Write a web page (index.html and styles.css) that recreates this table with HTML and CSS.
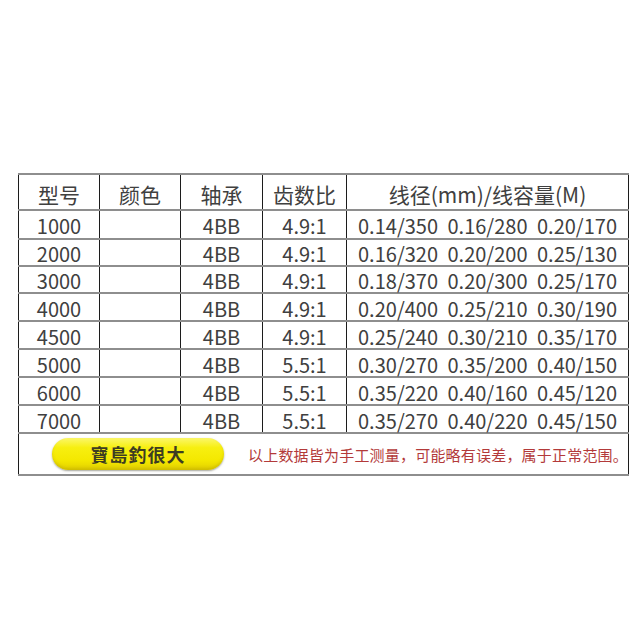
FILE: index.html
```html
<!DOCTYPE html>
<html lang="zh-CN">
<head>
<meta charset="utf-8">
<title>规格表</title>
<link rel="stylesheet" href="styles.css">
</head>
<body>
<div class="page">
  <table class="spec">
    <colgroup>
      <col class="c1"><col class="c2"><col class="c3"><col class="c4"><col class="c5">
    </colgroup>
    <thead>
      <tr class="head"><th>型号</th><th>颜色</th><th>轴承</th><th>齿数比</th><th>线径(mm)/线容量(M)</th></tr>
    </thead>
    <tbody>
      <tr class="r r1"><td>1000</td><td></td><td>4BB</td><td>4.9:1</td><td class="line">0.14/350 0.16/280 0.20/170</td></tr>
      <tr class="r r2"><td>2000</td><td></td><td>4BB</td><td>4.9:1</td><td class="line">0.16/320 0.20/200 0.25/130</td></tr>
      <tr class="r r3"><td>3000</td><td></td><td>4BB</td><td>4.9:1</td><td class="line">0.18/370 0.20/300 0.25/170</td></tr>
      <tr class="r r4"><td>4000</td><td></td><td>4BB</td><td>4.9:1</td><td class="line">0.20/400 0.25/210 0.30/190</td></tr>
      <tr class="r r5"><td>4500</td><td></td><td>4BB</td><td>4.9:1</td><td class="line">0.25/240 0.30/210 0.35/170</td></tr>
      <tr class="r r6"><td>5000</td><td></td><td>4BB</td><td>5.5:1</td><td class="line">0.30/270 0.35/200 0.40/150</td></tr>
      <tr class="r r7"><td>6000</td><td></td><td>4BB</td><td>5.5:1</td><td class="line">0.35/220 0.40/160 0.45/120</td></tr>
      <tr class="r r8"><td>7000</td><td></td><td>4BB</td><td>5.5:1</td><td class="line">0.35/270 0.40/220 0.45/150</td></tr>
      <tr class="foot">
        <td colspan="5">
          <div class="foot-inner">
            <span class="pill">寶島釣很大</span>
            <span class="note">以上数据皆为手工测量，可能略有误差，属于正常范围。</span>
          </div>
        </td>
      </tr>
    </tbody>
  </table>
</div>
</body>
</html>
```
FILE: styles.css
```css
html, body {
  margin: 0;
  padding: 0;
  background: #ffffff;
}

body {
  font-family: "Noto Sans CJK SC", "Noto Sans", sans-serif;
  color: #404040;
}

.page {
  padding: 173px 0 0 18px;
}

.spec {
  border-collapse: collapse;
  table-layout: fixed;
  width: 610px;
}

.c1 { width: 81px; }
.c2 { width: 81px; }
.c3 { width: 82px; }
.c4 { width: 84px; }
.c5 { width: 282px; }

.spec th,
.spec td {
  border-top: 2px solid #8e8e8e;
  border-bottom: 2px solid #8e8e8e;
  border-left: 1px solid #1c1c1c;
  border-right: 1px solid #1c1c1c;
  padding: 0;
  text-align: center;
  vertical-align: middle;
  font-weight: 400;
  white-space: nowrap;
}

.head th {
  height: 30px;
  font-size: 21px;
  line-height: 24px;
  padding-top: 4px;
}

.r td {
  font-size: 20px;
  line-height: 22px;
  padding-top: 3px;
}

.r1 td { height: 24px; }
.r2 td { height: 22px; }
.r3 td { height: 22px; }
.r4 td { height: 23px; }
.r5 td { height: 23px; }
.r6 td { height: 23px; }
.r7 td { height: 23px; }
.r8 td { height: 23px; }

.line {
  word-spacing: 5px;
}

.foot td {
  height: 40px;
  text-align: left;
}

.foot-inner {
  display: flex;
  align-items: center;
  padding-left: 33px;
  gap: 24px;
}

.pill {
  display: flex;
  align-items: center;
  justify-content: center;
  width: 182px;
  height: 32px;
  border-radius: 16px;
  background: linear-gradient(180deg, #fbf76a 0%, #f7ef10 30%, #f4e800 70%, #e2d000 100%);
  box-shadow: 0 1px 2px rgba(90, 90, 70, 0.55), inset 0 -2px 3px rgba(160, 140, 0, 0.3);
  font-size: 18px;
  font-weight: 700;
  letter-spacing: 1px;
  color: #3d3d22;
}

.note {
  font-size: 15px;
  color: #b33a3a;
  letter-spacing: 0.2px;
}
```
